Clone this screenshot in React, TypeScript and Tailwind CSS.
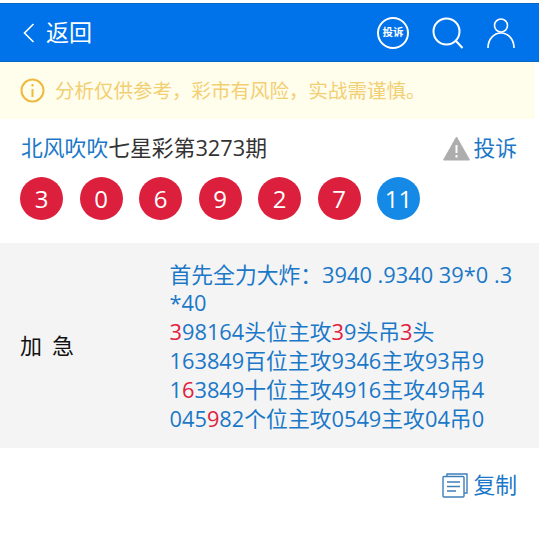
const font = { fontFamily: '"Open Sans", "Noto Sans CJK SC", sans-serif' };

function Ball({ n, blue }: { n: string; blue?: boolean }) {
  return (
    <div className={`w-[43px] h-[43px] rounded-full flex items-center justify-center text-white text-[24px] ${blue ? "bg-[#148ae6]" : "bg-[#dc1f3c]"}`}>
      {n}
    </div>
  );
}

function R({ children }: { children: string }) {
  return <span className="text-[#e0213f]">{children}</span>;
}

export default function App() {
  return (
    <div className="w-[539px] h-[535px] bg-white pt-[3px]" style={font}>
      <header className="h-[59px] bg-[#0073ea] border-y border-[#0a66c4] flex items-center pl-[22px] pr-[23px] text-white">
        <svg width="14" height="20" viewBox="0 0 14 20" fill="none" stroke="#fff" strokeWidth="1.6">
          <path d="M11.5 1 L2.5 10 L11.5 19" />
        </svg>
        <span className="ml-[10px] text-[23px]">返回</span>
        <div className="ml-auto flex items-center">
          <div className="w-[32px] h-[32px] rounded-full border-2 border-white flex items-center justify-center text-[10.5px] font-bold leading-none whitespace-nowrap">
            投诉
          </div>
          <svg className="ml-[23px]" width="32" height="32" viewBox="0 0 32 32" fill="none" stroke="#fff" strokeWidth="2">
            <circle cx="14.5" cy="14.5" r="13" />
            <path d="M24 24 L30.5 31" />
          </svg>
          <svg className="ml-[22px]" width="30" height="32" viewBox="0 0 30 32" fill="none" stroke="#fff" strokeWidth="1.6">
            <circle cx="15" cy="8.5" r="6.5" />
            <path d="M2 31 C2 22 8 16 15 16 C22 16 28 22 28 31" />
          </svg>
        </div>
      </header>

      <div className="h-[57px] w-[535px] bg-[#fffdec] flex items-center pl-[20px] text-[#f2cf72] text-[19.5px]">
        <svg width="25" height="25" viewBox="0 0 25 25" fill="none" stroke="#eeba3e" strokeWidth="2">
          <circle cx="12.5" cy="12.5" r="11" />
          <path d="M12.5 11 V19 M12.5 6 V8.5" />
        </svg>
        <span className="ml-[10px]">分析仅供参考{"\uFF0C"}彩市有风险{"\uFF0C"}实战需谨慎。</span>
      </div>

      <div className="pt-[14px] pl-[21px] pr-[22px]">
        <div className="flex items-center h-[30px] text-[21.8px]">
          <span className="text-[#1b78c8]">北风吹吹</span>
          <span className="text-[#333]">七星彩第3273期</span>
          <div className="ml-auto flex items-center text-[#1b78c8]">
            <svg width="27" height="25" viewBox="0 0 27 25">
              <path d="M13.5 1 L26.5 24 H0.5 Z" fill="#adadad" stroke="#adadad" strokeLinejoin="round" />
              <path d="M13.5 9 V17 M13.5 19 V21.5" stroke="#fff" strokeWidth="2" />
            </svg>
            <span className="ml-[3px]">投诉</span>
          </div>
        </div>
        <div className="mt-[14px] flex gap-[16.5px] -ml-[1px]">
          {["3", "0", "6", "9", "2", "7"].map((n, i) => (
            <Ball key={i} n={n} />
          ))}
          <Ball n="11" blue />
        </div>
      </div>

      <div className="mt-[23px] h-[205px] bg-[#f4f4f4] flex items-center pl-[20px] pr-[24px]">
        <div className="w-[149.5px] shrink-0 text-[22px] text-[#111] tracking-[0.1em]">加 急</div>
        <div className="pt-[3px] text-[21.8px] leading-[28.8px] text-[#1b78c8] whitespace-nowrap">
          首先全力大炸{"\uFF1A"}3940 .9340 39*0 .3
          <br />
          *40
          <br />
          <R>3</R>98164头位主攻<R>3</R>9头吊<R>3</R>头
          <br />
          163849百位主攻9346主攻93吊9
          <br />
          1<R>6</R>3849十位主攻4916主攻49吊4
          <br />
          045<R>9</R>82个位主攻0549主攻04吊0
        </div>
      </div>

      <div className="flex items-center justify-end pr-[22px] pt-[21px] text-[21.8px] text-[#1b78c8]">
        <svg width="26" height="26" viewBox="0 0 26 26" fill="none" stroke="#3f7fb8" strokeWidth="1.4">
          <path d="M5 4 V2 H25 V21 H22" />
          <rect x="1" y="4.5" width="21" height="20.5" rx="1" />
          <path d="M5 10 H18 M5 14.5 H18 M5 19 H14" />
        </svg>
        <span className="ml-[5px]">复制</span>
      </div>
    </div>
  );
}
